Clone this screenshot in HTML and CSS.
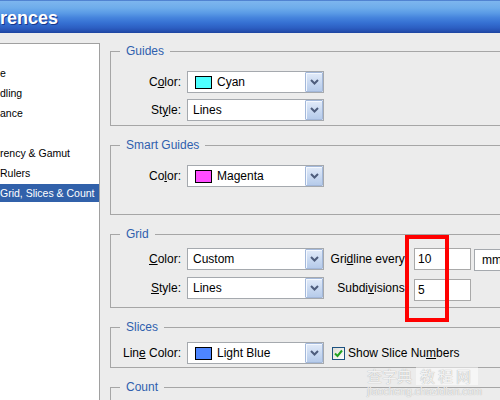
FILE: index.html
```html
<!DOCTYPE html>
<html>
<head>
<meta charset="utf-8">
<link rel="stylesheet" href="styles.css">
</head>
<body>
<div class="window">
  <div class="titlebar"><span class="title">rences</span></div>
  <div class="main">
    <ul class="nav">
      <li></li>
      <li>e</li>
      <li>dling</li>
      <li>ance</li>
      <li></li>
      <li>rency &amp; Gamut</li>
      <li>Rulers</li>
      <li class="sel">Grid, Slices &amp; Count</li>
    </ul>
    <div class="panel">
      <fieldset class="group g-guides">
        <legend>Guides</legend>
        <div class="rows">
          <label>C<u>o</u>lor:</label>
          <div class="select"><span class="swatch cyan"></span><span class="val">Cyan</span><span class="btn"><svg width="9" height="6" viewBox="0 0 9 6"><polyline points="1,1 4.5,4.5 8,1" fill="none" stroke="#4e5d7c" stroke-width="2"/></svg></span></div>
          <label>St<u>y</u>le:</label>
          <div class="select"><span class="val plain">Lines</span><span class="btn"><svg width="9" height="6" viewBox="0 0 9 6"><polyline points="1,1 4.5,4.5 8,1" fill="none" stroke="#4e5d7c" stroke-width="2"/></svg></span></div>
        </div>
      </fieldset>
      <fieldset class="group g-smart">
        <legend>Smart Guides</legend>
        <div class="rows">
          <label>Co<u>l</u>or:</label>
          <div class="select"><span class="swatch magenta"></span><span class="val">Magenta</span><span class="btn"><svg width="9" height="6" viewBox="0 0 9 6"><polyline points="1,1 4.5,4.5 8,1" fill="none" stroke="#4e5d7c" stroke-width="2"/></svg></span></div>
        </div>
      </fieldset>
      <fieldset class="group g-grid">
        <legend>Grid</legend>
        <div class="rows rows-grid">
          <label><u>C</u>olor:</label>
          <div class="select"><span class="val plain">Custom</span><span class="btn"><svg width="9" height="6" viewBox="0 0 9 6"><polyline points="1,1 4.5,4.5 8,1" fill="none" stroke="#4e5d7c" stroke-width="2"/></svg></span></div>
          <label>Gri<u>d</u>line every:</label>
          <div class="input">10</div>
          <div class="select unit"><span class="val">mm</span></div>
          <label><u>S</u>tyle:</label>
          <div class="select"><span class="val plain">Lines</span><span class="btn"><svg width="9" height="6" viewBox="0 0 9 6"><polyline points="1,1 4.5,4.5 8,1" fill="none" stroke="#4e5d7c" stroke-width="2"/></svg></span></div>
          <label>Subdi<u>v</u>isions:</label>
          <div class="input low">5</div>
        </div>
      </fieldset>
      <fieldset class="group g-slices">
        <legend>Slices</legend>
        <div class="rows rows-slices">
          <label>Lin<u>e</u> Color:</label>
          <div class="select"><span class="swatch lightblue"></span><span class="val">Light Blue</span><span class="btn"><svg width="9" height="6" viewBox="0 0 9 6"><polyline points="1,1 4.5,4.5 8,1" fill="none" stroke="#4e5d7c" stroke-width="2"/></svg></span></div>
          <div class="check"><span class="box"><svg width="11" height="11" viewBox="0 0 11 11"><polyline points="2,5.5 4.5,8 9,2.5" fill="none" stroke="#21a121" stroke-width="2"/></svg></span><span>Show Slice Nu<u>m</u>bers</span></div>
        </div>
      </fieldset>
      <fieldset class="group g-count">
        <legend>Count</legend>
      </fieldset>
    </div>
  </div>
  <div class="highlight"></div>
  <div class="watermark">
    <div class="wm1"><span>查字典</span><span class="wmbox">教程网</span></div>
    <div class="wm2">jiaocheng.chazidian.com</div>
  </div>
</div>
</body>
</html>
```
FILE: styles.css
```css
html, body {
  margin: 0;
  padding: 0;
}
body {
  width: 500px;
  height: 400px;
  overflow: hidden;
  background: #ececec;
  font-family: "Liberation Sans", Arial, sans-serif;
  font-size: 12px;
  color: #000;
}
.window {
  position: relative;
  width: 500px;
  height: 400px;
  overflow: hidden;
}
.titlebar {
  height: 33px;
  box-sizing: border-box;
  padding-top: 4px;
  line-height: 29px;
  background: linear-gradient(#2450b4 0, #7db6ee 1px, #6eaceb 8px, #5a9be6 13px, #4482dc 18px, #3570d2 23px, #2c5ec2 28px, #2550b0 31px, #1c44a0 33px);
}
.title {
  color: #fff;
  font-weight: bold;
  font-size: 18px;
  text-shadow: 1px 1px 0 #17378c;
}
.main {
  display: flex;
  height: 367px;
}
.nav {
  list-style: none;
  margin: 10px 0 0 0;
  padding: 0;
  width: 99px;
  background: #fff;
  border-top: 1px solid #a0a0a0;
  border-right: 1px solid #a0a0a0;
  overflow: hidden;
  font-size: 10.5px;
}
.nav li {
  height: 18px;
  line-height: 18px;
  margin-bottom: 2px;
  white-space: nowrap;
  overflow: hidden;
}
.nav li.sel {
  background: #3161aa;
  color: #fff;
}
.panel {
  margin-left: 10px;
  padding-top: 12px;
  width: 390px;
  overflow: hidden;
}
.group {
  margin: 0 0 13px 0;
  border: 1px solid #a6a6a6;
  padding: 13px 0 4px 9px;
  width: 420px;
  min-width: 0;
}
.group legend {
  padding: 0 6px;
  margin: 0;
  line-height: 13px;
  color: #2f5fae;
}
.g-smart { padding-top: 13px; padding-bottom: 27px; }
.g-grid { padding-top: 7px; padding-bottom: 6px; }
.g-slices { padding-top: 8px; padding-bottom: 3px; }
.g-count { height: 40px; }
.rows {
  display: grid;
  grid-template-columns: 61px 137px;
  column-gap: 6px;
  row-gap: 6px;
  align-items: start;
}
.rows-grid {
  grid-template-columns: 61px 137px 78px 57px 60px;
}
.rows-slices {
  grid-template-columns: 61px 137px auto;
}
.rows label {
  text-align: right;
  line-height: 22px;
  white-space: nowrap;
}
u {
  text-decoration: underline;
  text-underline-offset: 1px;
}
.select {
  box-sizing: border-box;
  width: 137px;
  height: 22px;
  border: 1px solid #a5a9ae;
  background: #fff;
  display: flex;
  align-items: center;
}
.select .val {
  line-height: 20px;
  margin-left: 5px;
  white-space: nowrap;
}
.select .val.plain {
  margin-left: 5px;
}
.swatch {
  box-sizing: border-box;
  width: 17px;
  height: 13px;
  border: 1px solid #000;
  margin-left: 7px;
}
.cyan { background: #4effff; }
.magenta { background: #ff4cff; }
.lightblue { background: #4d85ff; }
.btn {
  margin-left: auto;
  box-sizing: border-box;
  width: 18px;
  height: 20px;
  border: 1px solid #a3b8da;
  border-radius: 1px;
  background: linear-gradient(#e2ebf9, #c6d7f0 60%, #b6cbea);
  box-shadow: inset 1px 1px 0 #f4f8fe;
  display: flex;
  align-items: center;
  justify-content: center;
}
.input {
  box-sizing: border-box;
  width: 57px;
  height: 22px;
  border: 1px solid #a9a9a9;
  background: #fff;
  line-height: 20px;
  padding-left: 3px;
}
.input.low {
  margin-top: 2px;
}
.select.unit {
  width: 60px;
  margin-left: -3px;
  margin-top: 1px;
}
.select.unit .val {
  margin-left: 7px;
}
.check {
  display: flex;
  align-items: center;
  height: 22px;
  margin-left: 2px;
  white-space: nowrap;
}
.check .box {
  box-sizing: border-box;
  width: 13px;
  height: 13px;
  border: 1px solid #1c5180;
  background: linear-gradient(135deg, #dcdcd6, #fff);
  display: flex;
  align-items: center;
  justify-content: center;
  margin-right: 3px;
}
.highlight {
  position: absolute;
  left: 405px;
  top: 235px;
  width: 44px;
  height: 87px;
  box-sizing: border-box;
  border: 4px solid #ff0000;
}
.watermark {
  position: absolute;
  left: 367px;
  top: 367px;
  font-family: "Noto Sans CJK SC", sans-serif;
  color: #f2f2f2;
  text-shadow: 0 0 1px #9a9a9a;
}
.wm1 {
  font-size: 15px;
  line-height: 18px;
  display: flex;
  gap: 4px;
}
.wmbox {
  background: rgba(255, 255, 255, 0.5);
  padding: 0 4px;
  letter-spacing: 3px;
}
.wm2 {
  font-family: "Liberation Sans", sans-serif;
  font-size: 10.5px;
  line-height: 12px;
}
```
